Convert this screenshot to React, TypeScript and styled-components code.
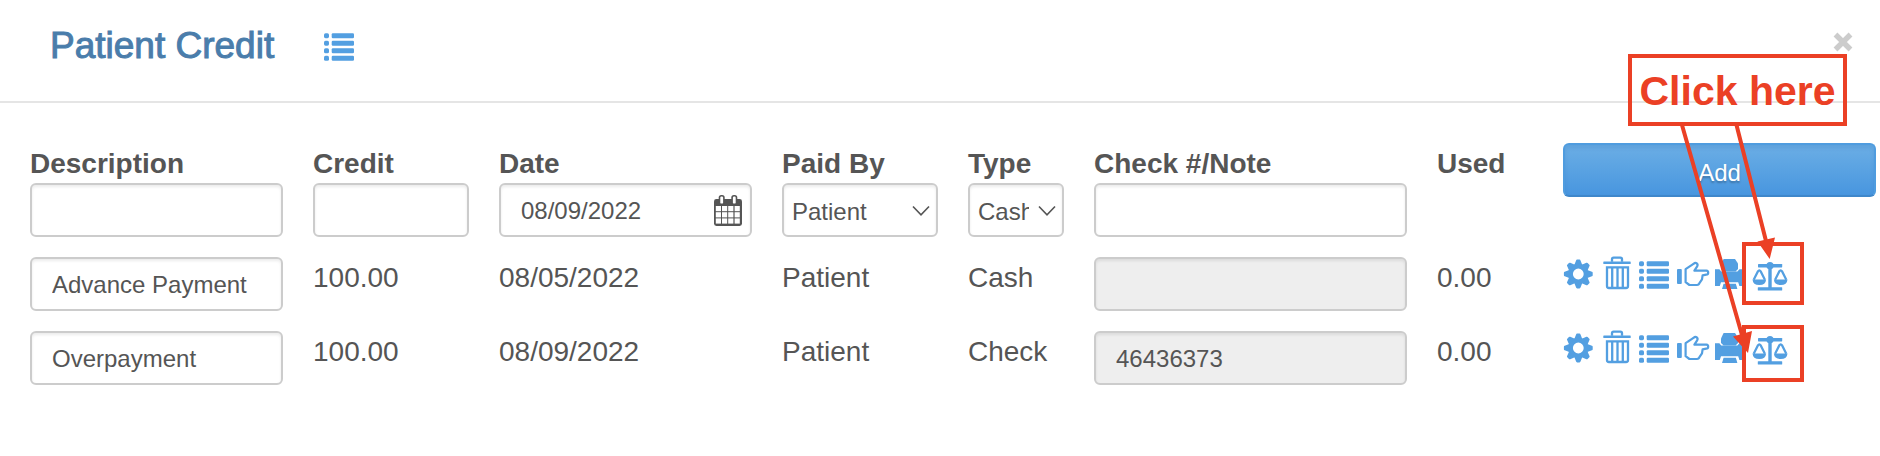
import React from "react";
import styled, { createGlobalStyle } from "styled-components";

const BLUE = "#539fe1";
const RED = "#eb4025";
const TEXT = "#555555";

const GlobalStyle = createGlobalStyle`
  *, *::before, *::after { box-sizing: border-box; }
  body {
    margin: 0;
    background: #fff;
    color: ${TEXT};
    font-family: "Helvetica Neue", "Liberation Sans", Arial, sans-serif;
    font-size: 28px;
    line-height: 42px;
  }
  button, input, select { font: inherit; color: inherit; }
`;

const Dialog = styled.section`
  position: relative;
  width: 100%;
  overflow: hidden;
`;

const Header = styled.header`
  display: flex;
  align-items: center;
  padding: 24px 27px 33px 50px;
  border-bottom: 2px solid #e5e5e5;
`;

const Title = styled.h1`
  margin: 0;
  font-size: 37px;
  line-height: 44px;
  font-weight: 400;
  color: #4a7dab;
  -webkit-text-stroke: 1px #4a7dab;
`;

const IconButton = styled.button`
  display: block;
  flex: none;
  padding: 0;
  border: 0;
  background: none;
  color: ${BLUE};
  cursor: pointer;
`;

const HeaderIcon = styled(IconButton)`
  margin-left: 50px;
`;

const CloseButton = styled(IconButton)`
  align-self: flex-start;
  margin: 8px 0 0 auto;
  color: #cccccc;
`;

const Svg = styled.svg`
  display: block;
  overflow: visible;
  fill: currentColor;
`;

const Body = styled.main`
  padding: 40px 4px 50px 30px;
`;

const Table = styled.table`
  width: 100%;
  table-layout: fixed;
  border-collapse: collapse;
`;

const Col = styled.col<{ $w: number }>`
  width: ${(p) => p.$w}px;
`;

const HeadCell = styled.th`
  padding: 2px 30px 0 0;
  line-height: 38px;
  text-align: left;
  vertical-align: top;
  white-space: nowrap;
  font-weight: 700;
`;

const Cell = styled.td<{ $last?: boolean }>`
  height: 74px;
  padding: 0 ${(p) => (p.$last ? 0 : 30)}px 0 0;
  text-align: left;
  vertical-align: top;
`;

const Field = styled.input`
  display: block;
  width: 100%;
  height: 54px;
  padding: 2px 20px 0;
  border: 2px solid #cccccc;
  border-radius: 6px;
  background: #fff;
  box-shadow: inset 0 2px 3px rgba(0, 0, 0, 0.08);
  font-size: 24px;
  outline: none;
  &:disabled {
    background: #eeeeee;
    color: ${TEXT};
  }
`;

const DateBox = styled.div`
  display: flex;
  align-items: center;
  height: 54px;
  padding: 0 8px 0 20px;
  border: 2px solid #cccccc;
  border-radius: 6px;
  box-shadow: inset 0 2px 3px rgba(0, 0, 0, 0.08);
`;

const DateInput = styled.input`
  flex: 1;
  min-width: 0;
  height: 48px;
  padding: 2px 0 0;
  border: 0;
  background: none;
  font-size: 24px;
  outline: none;
`;

const CalendarButton = styled(IconButton)`
  color: ${TEXT};
`;

const SelectBox = styled.div`
  position: relative;
`;

const Select = styled.select`
  display: block;
  appearance: none;
  width: 100%;
  height: 54px;
  padding: 4px 33px 0 8px;
  border: 2px solid #cccccc;
  border-radius: 6px;
  background: #fff;
  box-shadow: inset 0 2px 3px rgba(0, 0, 0, 0.08);
  font-size: 24px;
  outline: none;
`;

const Chevron = styled.svg`
  position: absolute;
  top: 22px;
  right: 8px;
  fill: none;
  stroke: ${TEXT};
  stroke-width: 1.6;
  pointer-events: none;
`;

const AddButton = styled.button`
  display: block;
  width: 100%;
  height: 54px;
  padding: 6px 0 0;
  border: 2px solid #4f9cdf;
  border-bottom-color: #3f87ca;
  border-radius: 6px;
  background: linear-gradient(#6baee5, #4896df);
  box-shadow: inset 0 3px 4px rgba(40, 110, 180, 0.2);
  color: #fff;
  font-size: 24px;
  text-shadow: 0 2px 2px rgba(0, 0, 0, 0.25);
  cursor: pointer;
`;

const Actions = styled.div`
  display: flex;
  gap: 8px;
`;

const Annotation = styled.div`
  position: absolute;
  top: 0;
  right: 0;
  width: 280px;
  height: 400px;
  pointer-events: none;
`;

const Callout = styled.div`
  position: absolute;
  top: 54px;
  right: 33px;
  width: 219px;
  height: 72px;
  border: 4px solid ${RED};
  color: ${RED};
  font-size: 41px;
  font-weight: 700;
  line-height: 66px;
  text-align: center;
  white-space: nowrap;
`;

const Arrows = styled.svg`
  position: absolute;
  inset: 0;
`;

const Icon = ({ children }: { children: React.ReactNode }) => (
  <Svg width="30" height="34" viewBox="0 0 30 34" aria-hidden="true">
    {children}
  </Svg>
);

const ListIcon = () => (
  <Icon>
    {[4.2, 11.7, 19.3, 26.8].map((y) => (
      <g key={y}>
        <rect x="0" y={y} width="5" height="5" rx="1.6" />
        <rect x="7.7" y={y} width="22.3" height="5" rx="1.2" />
      </g>
    ))}
  </Icon>
);

const GearIcon = () => (
  <Icon>
    <g transform="translate(15.3 17)">
      <circle r="7.8" fill="none" stroke="currentColor" strokeWidth="4.8" />
      {[0, 45, 90, 135, 180, 225, 270, 315].map((a) => (
        <path key={a} d="M-4 -9L-2.2 -13.6Q-2 -14.4 -1.2 -14.4H1.2Q2 -14.4 2.2 -13.6L4 -9Z" transform={`rotate(${a})`} />
      ))}
    </g>
  </Icon>
);

const TrashIcon = () => (
  <Icon>
    <rect x="2.3" y="4.4" width="27.4" height="2.6" rx="0.6" />
    <g fill="none" stroke="currentColor" strokeWidth="2.3">
      <path d="M11 4.8V2.2Q11 .6 12.6 .6H19.4Q21 .6 21 2.2V4.8" />
      <path d="M6 10.3H27V29Q27 31 25 31H8Q6 31 6 29Z" />
      <path d="M11.2 10V30M16.5 10V30M21.8 10V30" />
    </g>
  </Icon>
);

const HandIcon = () => (
  <Icon>
    <rect x="0" y="12" width="4.8" height="15" rx="1" />
    <path
      d="M8.6 12.2L16.5 6.9Q18.3 5 20 6.6Q21.2 7.8 20 9.6L17.4 13.7H29.4Q31.2 13.9 31.2 15.7Q31.2 17.5 29.2 17.7L25.6 18.4L25 22.4L22.6 25.8Q22 28 20 28H12.4L8.6 25.2Z"
      fill="none"
      stroke="currentColor"
      strokeWidth="2.2"
      strokeLinejoin="round"
    />
  </Icon>
);

const PrinterIcon = () => (
  <Icon>
    <path d="M8.6 2H20L23 6.5V12L20.6 14.5H8.6L6 12V7.5Z" />
    <path d="M0 12.3H4.4L6.2 14.6H22.4L24.4 12.3H28.8V29H24.4L23.2 25.2H6L4.8 29H0Z" />
    <path d="M8.6 26.8H20.8L22.4 32H7Z" />
  </Icon>
);

const ScaleIcon = () => (
  <Icon>
    <rect x="5" y="7" width="24.2" height="3.4" rx="0.6" />
    <circle cx="17" cy="8.7" r="3.6" />
    <rect x="15.3" y="8" width="3.4" height="24" />
    <rect x="4.8" y="30.2" width="24.4" height="3.4" rx="0.6" />
    {[6.3, 27.7].map((x) => (
      <g key={x} transform={`translate(${x} 0)`}>
        <path
          d="M-5.6 22.8L-1.4 14.4Q0 12.2 1.4 14.4L5.6 22.8"
          fill="none"
          stroke="currentColor"
          strokeWidth="2.2"
        />
        <path d="M-6.8 22.4H6.8Q6.4 28 0 28Q-6.4 28 -6.8 22.4Z" />
      </g>
    ))}
  </Icon>
);

const CalendarIcon = () => (
  <Svg width="28" height="31" viewBox="0 0 28 31" aria-hidden="true">
    <rect x="0" y="4" width="28" height="27" rx="2.4" />
    {[6, 18.6].map((x) => (
      <g key={x}>
        <rect x={x - 1.3} y="0" width="6" height="10" rx="2.6" />
        <rect x={x + 0.3} y="1.6" width="2.8" height="7" rx="1.2" fill="#fff" />
      </g>
    ))}
    {[11, 17.2, 23.4].map((y) =>
      [1.8, 8, 14.2, 20.6].map((x) => (
        <rect key={`${x}-${y}`} x={x} y={y} width="5.2" height="5.2" fill="#fff" />
      ))
    )}
  </Svg>
);

const Dropdown = ({ label, options }: { label: string; options: string[] }) => (
  <SelectBox>
    <Select aria-label={label} defaultValue={options[0]}>
      {options.map((o) => (
        <option key={o}>{o}</option>
      ))}
    </Select>
    <Chevron width="18" height="12" viewBox="0 0 18 12" aria-hidden="true">
      <path d="M1 1.5L9 9.8L17 1.5" />
    </Chevron>
  </SelectBox>
);

const columns = [283, 186, 283, 186, 126, 343, 126, 313];
const headings = ["Description", "Credit", "Date", "Paid By", "Type", "Check #/Note", "Used"];

const credits = [
  { description: "Advance Payment", credit: "100.00", date: "08/05/2022", paidBy: "Patient", type: "Cash", note: "", used: "0.00" },
  { description: "Overpayment", credit: "100.00", date: "08/09/2022", paidBy: "Patient", type: "Check", note: "46436373", used: "0.00" },
];

const actions = [
  { label: "Settings", Glyph: GearIcon },
  { label: "Delete", Glyph: TrashIcon },
  { label: "Details", Glyph: ListIcon },
  { label: "Assign", Glyph: HandIcon },
  { label: "Print", Glyph: PrinterIcon },
  { label: "Balance", Glyph: ScaleIcon },
];

export default function App() {
  return (
    <Dialog aria-labelledby="credit-title">
      <GlobalStyle />
      <Header>
        <Title id="credit-title">Patient Credit</Title>
        <HeaderIcon aria-label="List">
          <ListIcon />
        </HeaderIcon>
        <CloseButton aria-label="Close">
          <Svg width="20" height="20" viewBox="0 0 20 20" aria-hidden="true">
            <path d="M2.5 2.5L17.5 17.5M17.5 2.5L2.5 17.5" stroke="currentColor" strokeWidth="5.4" />
          </Svg>
        </CloseButton>
      </Header>
      <Body>
        <Table>
          <colgroup>
            {columns.map((w, i) => (
              <Col key={i} $w={w} />
            ))}
          </colgroup>
          <thead>
            <tr>
              {headings.map((h) => (
                <HeadCell key={h} scope="col">{h}</HeadCell>
              ))}
              <Cell $last rowSpan={2}>
                <AddButton>Add</AddButton>
              </Cell>
            </tr>
            <tr>
              <Cell><Field aria-label="Description" /></Cell>
              <Cell><Field aria-label="Credit" /></Cell>
              <Cell>
                <DateBox>
                  <DateInput aria-label="Date" defaultValue="08/09/2022" />
                  <CalendarButton aria-label="Choose date"><CalendarIcon /></CalendarButton>
                </DateBox>
              </Cell>
              <Cell><Dropdown label="Paid By" options={["Patient", "Insurance"]} /></Cell>
              <Cell><Dropdown label="Type" options={["Cash", "Check"]} /></Cell>
              <Cell><Field aria-label="Check #/Note" /></Cell>
              <Cell />
            </tr>
          </thead>
          <tbody>
            {credits.map((c) => (
              <tr key={c.description}>
                <Cell><Field aria-label="Description" defaultValue={c.description} /></Cell>
                <Cell>{c.credit}</Cell>
                <Cell>{c.date}</Cell>
                <Cell>{c.paidBy}</Cell>
                <Cell>{c.type}</Cell>
                <Cell><Field aria-label="Check #/Note" defaultValue={c.note} disabled /></Cell>
                <Cell>{c.used}</Cell>
                <Cell $last>
                  <Actions>
                    {actions.map(({ label, Glyph }) => (
                      <IconButton key={label} aria-label={label}><Glyph /></IconButton>
                    ))}
                  </Actions>
                </Cell>
              </tr>
            ))}
          </tbody>
        </Table>
      </Body>
      <Annotation>
        <Callout>Click here</Callout>
        <Arrows width="280" height="400" viewBox="1600 0 280 400" aria-hidden="true">
          <g fill="none" stroke={RED} strokeWidth="4">
            <rect x="1744" y="244" width="58" height="59" />
            <rect x="1744" y="327" width="58" height="53" />
            <path d="M1682 125L1742 335M1736.5 125L1766 241" />
          </g>
          <path fill={RED} d="M1733 336.5L1752 331L1748 353ZM1757.5 241.5L1775 237.5L1769.7 259Z" />
        </Arrows>
      </Annotation>
    </Dialog>
  );
}
